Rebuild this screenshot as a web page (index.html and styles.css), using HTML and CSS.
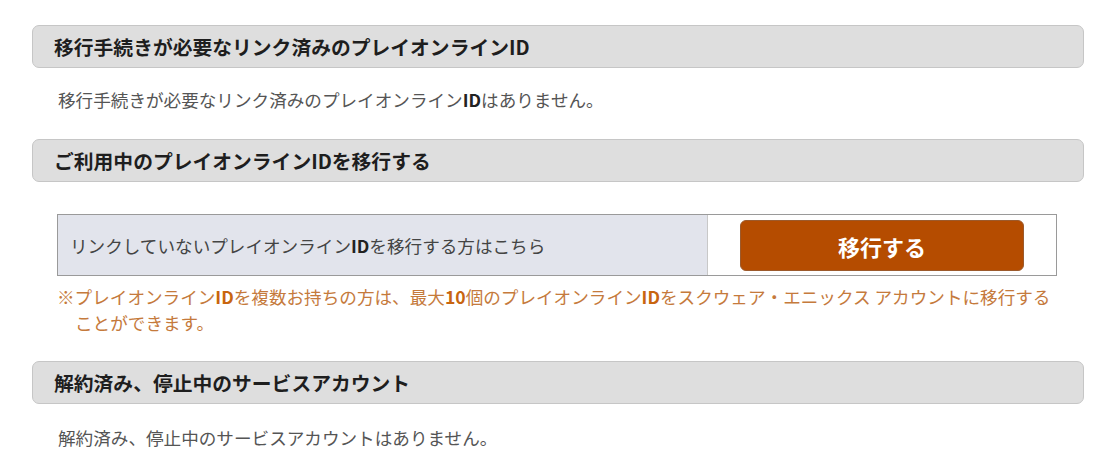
FILE: index.html
```html
<!DOCTYPE html>
<html lang="ja">
<head>
<meta charset="utf-8">
<link rel="stylesheet" href="styles.css">
</head>
<body>
<div class="page">
  <h2 class="head">移行手続きが必要なリンク済みのプレイオンラインID</h2>
  <p class="msg msg-1">移行手続きが必要なリンク済みのプレイオンライン<b>ID</b>はありません。</p>

  <h2 class="head head-2">ご利用中のプレイオンラインIDを移行する</h2>
  <div class="migrate">
    <div class="migrate-label">リンクしていないプレイオンライン<b>ID</b>を移行する方はこちら</div>
    <div class="migrate-action"><button class="btn">移行する</button></div>
  </div>
  <p class="note">※プレイオンライン<b>ID</b>を複数お持ちの方は、最大<b>10</b>個のプレイオンライン<b>ID</b>をスクウェア・エニックス アカウントに移行することができます。</p>

  <h2 class="head head-3">解約済み、停止中のサービスアカウント</h2>
  <p class="msg msg-3">解約済み、停止中のサービスアカウントはありません。</p>
</div>
</body>
</html>
```
FILE: styles.css
```css
* { box-sizing: border-box; }
html, body { margin: 0; padding: 0; background: #fff; }
body {
  font-family: "Noto Sans CJK JP", "Noto Sans", sans-serif;
  color: #555;
}
.page {
  width: 1084px;
  padding: 25px 0 0 32px;
}
.head {
  margin: 0;
  height: 43px;
  border: 1px solid #c6c6c6;
  border-radius: 7px;
  background: #dedede;
  padding: 0 0 0 21px;
  font-size: 19.8px;
  font-weight: bold;
  line-height: 41px;
  color: #1e1e1e;
}
.head-2 { margin-top: 26px; }
.head-3 { margin-top: 25px; }
.msg {
  margin: 19px 0 0 26px;
  font-size: 17.6px;
  line-height: 26px;
  color: #555;
}
.msg b { color: #222; }
.msg-3 { margin-top: 21px; }
.migrate {
  display: flex;
  margin: 32px 0 0 25px;
  width: 1000px;
  height: 62px;
  border: 1px solid #9a9a9a;
}
.migrate-label {
  width: 650px;
  background: #e2e4ec;
  border-right: 1px solid #c8c8c8;
  padding-left: 12px;
  display: flex;
  align-items: center;
  font-size: 17.6px;
  color: #444;
}
.migrate-label b { color: #222; }
.migrate-action {
  flex: 1;
  display: flex;
  align-items: center;
  justify-content: center;
}
.btn {
  width: 284px;
  height: 51px;
  border: 1px solid #9c5a2c;
  border-radius: 6px;
  background: #b54c00;
  color: #fff;
  font-family: inherit;
  font-size: 22px;
  font-weight: bold;
  padding: 0;
  margin-top: 1px;
}
.note {
  margin: 8px 0 0 25px;
  padding-left: 18px;
  text-indent: -18px;
  width: 995px;
  font-size: 17.6px;
  line-height: 26px;
  color: #c57a3c;
}
.note b { color: #c8650f; }
```
